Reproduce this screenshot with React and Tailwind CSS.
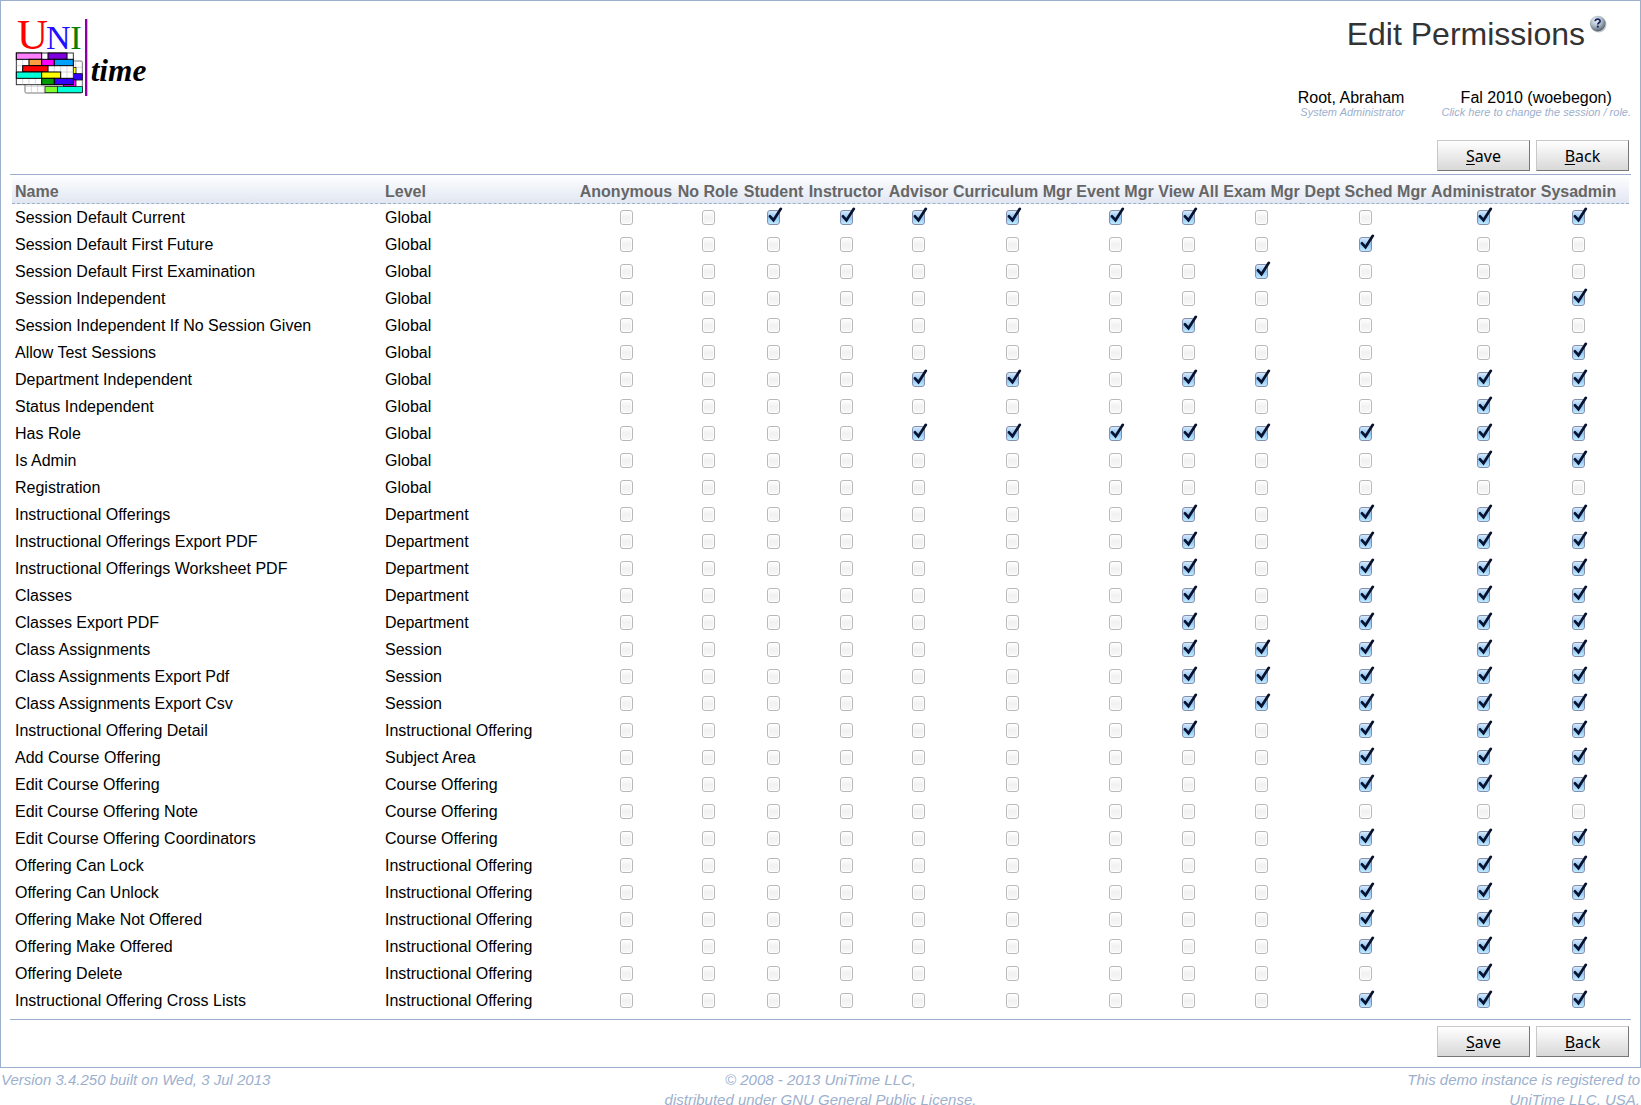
import React from "react";

const ROLES = [
  "Anonymous",
  "No Role",
  "Student",
  "Instructor",
  "Advisor",
  "Curriculum Mgr",
  "Event Mgr",
  "View All",
  "Exam Mgr",
  "Dept Sched Mgr",
  "Administrator",
  "Sysadmin",
];

// Each flag string holds one digit per role, in the order of ROLES.
const PERMISSIONS = [
  ["Session Default Current", "Global", "001111110011"],
  ["Session Default First Future", "Global", "000000000100"],
  ["Session Default First Examination", "Global", "000000001000"],
  ["Session Independent", "Global", "000000000001"],
  ["Session Independent If No Session Given", "Global", "000000010000"],
  ["Allow Test Sessions", "Global", "000000000001"],
  ["Department Independent", "Global", "000011011011"],
  ["Status Independent", "Global", "000000000011"],
  ["Has Role", "Global", "000011111111"],
  ["Is Admin", "Global", "000000000011"],
  ["Registration", "Global", "000000000000"],
  ["Instructional Offerings", "Department", "000000010111"],
  ["Instructional Offerings Export PDF", "Department", "000000010111"],
  ["Instructional Offerings Worksheet PDF", "Department", "000000010111"],
  ["Classes", "Department", "000000010111"],
  ["Classes Export PDF", "Department", "000000010111"],
  ["Class Assignments", "Session", "000000011111"],
  ["Class Assignments Export Pdf", "Session", "000000011111"],
  ["Class Assignments Export Csv", "Session", "000000011111"],
  ["Instructional Offering Detail", "Instructional Offering", "000000010111"],
  ["Add Course Offering", "Subject Area", "000000000111"],
  ["Edit Course Offering", "Course Offering", "000000000111"],
  ["Edit Course Offering Note", "Course Offering", "000000000000"],
  ["Edit Course Offering Coordinators", "Course Offering", "000000000111"],
  ["Offering Can Lock", "Instructional Offering", "000000000111"],
  ["Offering Can Unlock", "Instructional Offering", "000000000111"],
  ["Offering Make Not Offered", "Instructional Offering", "000000000111"],
  ["Offering Make Offered", "Instructional Offering", "000000000111"],
  ["Offering Delete", "Instructional Offering", "000000000011"],
  ["Instructional Offering Cross Lists", "Instructional Offering", "000000000111"],
];

function Logo() {
  const lines = { stroke: "#c4c4c4", strokeWidth: 2 };
  const columns = [1, 2, 3, 4, 5, 6, 7, 8];
  const rows = [1, 2, 3, 4];
  return (
    <svg width="132" height="77" viewBox="0 0 396 231" className="overflow-visible" role="img" aria-label="UniTime">
      <g fontFamily="'Liberation Serif', serif">
        <text x="3" y="91" fontSize="129" fill="#ff0000">U</text>
        <text x="90" y="91" fontSize="102" fill="#2010ff">N</text>
        <text x="163" y="91" fontSize="102" fill="#008000">I</text>
      </g>
      <g transform="translate(27 126)">
        <rect width="172" height="96" rx="4" fill="#fff" stroke="#777" strokeWidth="3" />
        {columns.map((c) => (
          <path key={c} d={`M${c * 19} 1V95`} {...lines} />
        ))}
        {rows.map((r) => (
          <path key={r} d={`M1 ${r * 19}H171`} {...lines} />
        ))}
        <g stroke="#000" strokeWidth="2">
          <rect x="133" y="19" width="20" height="19" fill="#ffff00" />
          <rect x="140" y="38" width="32" height="19" fill="#3300ff" />
          <rect x="115" y="57" width="38" height="19" fill="#ff00ff" />
          <rect x="60" y="77" width="37" height="18" fill="#80ff30" />
          <rect x="97" y="77" width="75" height="18" fill="#00ffd8" />
        </g>
      </g>
      <g transform="translate(1 102)">
        <rect width="171" height="95" fill="#fff" stroke="#333" strokeWidth="3" />
        {columns.map((c) => (
          <path key={c} d={`M${c * 19} 1V94`} {...lines} />
        ))}
        {rows.map((r) => (
          <path key={r} d={`M1 ${r * 19}H170`} {...lines} />
        ))}
        <g stroke="#000" strokeWidth="3">
          <rect x="0" y="0" width="76" height="19" fill="#ff80ff" />
          <rect x="95" y="0" width="57" height="19" fill="#8000e0" />
          <rect x="38" y="19" width="38" height="19" fill="#ffa040" />
          <rect x="76" y="19" width="38" height="19" fill="#ff00ff" />
          <rect x="114" y="19" width="57" height="19" fill="#00a0ff" />
          <rect x="19" y="38" width="76" height="19" fill="#ff0000" />
          <rect x="0" y="57" width="76" height="19" fill="#00ffd8" />
          <rect x="76" y="57" width="57" height="19" fill="#ffff00" />
          <rect x="76" y="76" width="38" height="19" fill="#009900" />
          <rect x="114" y="76" width="57" height="19" fill="#3300ff" />
        </g>
      </g>
      <rect x="207" y="0" width="7" height="231" fill="#8a00a8" />
      <text
        x="224"
        y="187"
        fontSize="94"
        fontStyle="italic"
        fontWeight="bold"
        fontFamily="'Liberation Serif', serif"
        fill="#000"
      >
        time
      </text>
    </svg>
  );
}

function HelpIcon() {
  return (
    <svg width="18" height="18" viewBox="0 0 18 18" aria-hidden="true">
      <defs>
        <radialGradient id="help-ball" cx="0.4" cy="0.3" r="0.7">
          <stop offset="0" stopColor="#f0f6fb" />
          <stop offset="0.55" stopColor="#a9b6c4" />
          <stop offset="1" stopColor="#56616f" />
        </radialGradient>
      </defs>
      <circle cx="9.6" cy="9.7" r="7.9" fill="#8a8f96" opacity="0.5" />
      <circle cx="8.7" cy="8.6" r="7.8" fill="url(#help-ball)" />
      <path
        d="M6.2 6.3C6.4 3.4 11.2 3.5 11.1 6.1C11 7.8 8.8 7.8 8.8 9.6"
        fill="none"
        stroke="#15235a"
        strokeWidth="1.7"
      />
      <circle cx="8.8" cy="11.7" r="1.1" fill="#15235a" />
    </svg>
  );
}

function CheckBox({ label, checked }) {
  return (
    <span className="relative mb-px block h-[15px] w-[13px]">
      <input
        type="checkbox"
        aria-label={label}
        defaultChecked={checked}
        className="peer block h-[15px] w-[13px] appearance-none rounded-[3px] border border-[#b9b9b9] bg-linear-to-b from-white via-[#f1f1f1] to-[#f8f8f8] shadow-[inset_0_0_0_1px_#ffffffcc] checked:border-[#8290ad] checked:from-[#d9eafb] checked:via-[#8fc4f5] checked:to-[#c0eaff] checked:shadow-none"
      />
      <svg
        viewBox="0 0 16 17"
        className="pointer-events-none absolute -top-[3px] left-0 hidden h-[17px] w-4 peer-checked:block"
        aria-hidden="true"
      >
        <path d="M3 9.3L6.5 13.2L13.8 1.8" fill="none" stroke="#06122e" strokeWidth="2.7" strokeLinecap="round" />
      </svg>
    </span>
  );
}

function ActionButton({ name }) {
  return (
    <button
      type="button"
      className="h-[31px] w-[93px] border border-t-[#c8c8c8] border-r-[#777] border-b-[#777] border-l-[#c8c8c8] bg-linear-to-b from-white to-[#d8d8d8] font-['Noto_Sans',sans-serif] text-base leading-none"
    >
      <span className="underline underline-offset-2">{name[0]}</span>
      {name.slice(1)}
    </button>
  );
}

function Actions() {
  return (
    <div className="flex justify-end gap-1.5 pr-0.5">
      <ActionButton name="Save" />
      <ActionButton name="Back" />
    </div>
  );
}

export default function App() {
  return (
    <div className="h-screen overflow-x-hidden overflow-y-auto bg-white font-['Liberation_Sans',Arial,sans-serif] text-base text-black [scrollbar-width:none]">
      <main className="border border-[#9cb0ce] px-[9px] pb-2.5">
        <header className="flex h-[139px] justify-between">
          <div className="pt-[18px] pl-1.5">
            <Logo />
          </div>
          <div className="flex flex-col items-end">
            <div className="flex pt-3.5 pr-6">
              <h1 className="pt-px text-[32px] leading-9 text-[#333]">Edit Permissions</h1>
              <button type="button" aria-label="Help" className="ml-1 h-[18px]">
                <HelpIcon />
              </button>
            </div>
            <div className="mt-[37px] flex gap-[37px] text-center">
              <div className="flex flex-col">
                <span className="leading-[18px]">Root, Abraham</span>
                <a href="#role" className="text-right text-[11px] leading-[10px] text-[#9cb0ce] italic">
                  System Administrator
                </a>
              </div>
              <div className="flex flex-col">
                <span className="leading-[18px]">Fal 2010 (woebegon)</span>
                <a href="#session" className="text-[11px] leading-[10px] text-[#9cb0ce] italic">
                  Click here to change the session / role.
                </a>
              </div>
            </div>
          </div>
        </header>

        <Actions />

        <div className="mt-[3px] border-y border-[#9cb0ce] px-0.5 pt-0.5 pb-[5px]">
          <table className="w-full table-fixed border-separate border-spacing-0 whitespace-nowrap">
            <colgroup>
              <col />
              <col className="w-[194px]" />
              <col className="w-[98px]" />
              <col className="w-[66px]" />
              <col className="w-[65px]" />
              <col className="w-[80px]" />
              <col className="w-[65px]" />
              <col className="w-[123px]" />
              <col className="w-[82px]" />
              <col className="w-[65px]" />
              <col className="w-[81px]" />
              <col className="w-[127px]" />
              <col className="w-[109px]" />
              <col className="w-[91px]" />
            </colgroup>
            <thead className="bg-linear-to-b from-[#fcfdfe] to-[#e0e6f2] text-left text-[#666]">
              <tr className="h-[27px]">
                <th className="border-b border-dashed border-[#9cb0ce] p-0 pt-[3px] pl-[3px] leading-[23px]">Name</th>
                <th className="border-b border-dashed border-[#9cb0ce] p-0 pt-[3px] pl-0.5 leading-[23px]">Level</th>
                {ROLES.map((role) => (
                  <th
                    key={role}
                    className="border-b border-dashed border-[#9cb0ce] p-0 pt-[3px] text-center leading-[23px] last:pr-2.5"
                  >
                    {role}
                  </th>
                ))}
              </tr>
            </thead>
            <tbody>
              {PERMISSIONS.map(([name, level, flags]) => (
                <tr key={name} className="h-[27px]">
                  <td className="p-0 pl-[3px]">{name}</td>
                  <td className="p-0 pl-0.5">{level}</td>
                  {ROLES.map((role, i) => (
                    <td key={role} className="p-0 last:pr-2.5">
                      <div className="flex justify-center">
                        <CheckBox label={`${name}: ${role}`} checked={flags[i] === "1"} />
                      </div>
                    </td>
                  ))}
                </tr>
              ))}
            </tbody>
          </table>
        </div>

        <div className="pt-1.5">
          <Actions />
        </div>
      </main>

      <footer className="grid grid-cols-3 px-px pt-0.5 text-[15px] leading-5 text-[#9cb0ce] italic">
        <p>Version 3.4.250 built on Wed, 3 Jul 2013</p>
        <p className="text-center">
          © 2008 - 2013 UniTime LLC,
          <br />
          distributed under GNU General Public License.
        </p>
        <p className="text-right">
          This demo instance is registered to
          <br />
          UniTime LLC, USA.
        </p>
      </footer>
    </div>
  );
}
